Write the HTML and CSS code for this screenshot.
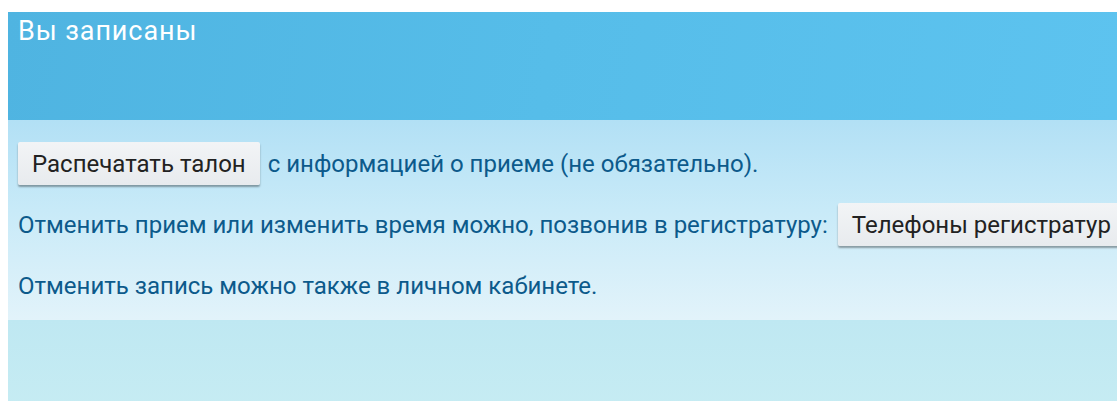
FILE: index.html
```html
<!DOCTYPE html>
<html lang="ru">
<head>
<meta charset="utf-8">
<title>Вы записаны</title>
<link rel="stylesheet" href="styles.css">
</head>
<body>
<div class="page">
  <header class="panel-head">
    <h1 class="panel-title">Вы записаны</h1>
  </header>
  <section class="panel-body">
    <div class="row">
      <button class="btn" type="button">Распечатать талон</button>
      <span class="note">с информацией о приеме (не обязательно).</span>
    </div>
    <div class="row">
      <span class="note">Отменить прием или изменить время можно, позвонив в регистратуру:</span>
      <button class="btn" type="button">Телефоны регистратур</button>
    </div>
    <div class="row">
      <span class="note">Отменить запись можно также в личном кабинете.</span>
    </div>
  </section>
  <div class="sky"></div>
</div>
</body>
</html>
```

FILE: styles.css
```css
html, body {
  margin: 0;
  padding: 0;
  background: #ffffff;
  overflow: hidden;
}

body {
  padding: 12px 0 0 8px;
  font-family: Roboto, "Liberation Sans", Arial, sans-serif;
}

.page {
  display: flex;
  flex-direction: column;
  min-width: 1200px;
}

/* blue title bar */
.panel-head {
  height: 108px;
  box-sizing: border-box;
  padding: 4px 10px 0;
  background: linear-gradient(100deg, #4fb4e1 0%, #56bde9 45%, #5ec4f0 100%);
}

.panel-title {
  margin: 0;
  font-size: 27px;
  font-weight: 400;
  line-height: 30px;
  letter-spacing: 0.9px;
  color: #ffffff;
}

/* light body with the actions */
.panel-body {
  display: flex;
  flex-direction: column;
  gap: 18px;
  padding: 22px 10px 13px;
  background: linear-gradient(180deg, #b2e0f5 0%, #c8eaf8 45%, #e2f3fa 100%);
}

.row {
  display: flex;
  align-items: center;
  gap: 8px;
  min-height: 43px;
  white-space: nowrap;
}

.row .note + .btn {
  margin-left: 2px;
}

.note {
  font-size: 24px;
  color: #0c5a8b;
}

.btn {
  height: 43px;
  padding: 0 14px;
  border: 0;
  border-radius: 2px;
  background: linear-gradient(180deg, #f2f4f6 0%, #e8ebee 100%);
  box-shadow: 0 2px 2px rgba(0, 0, 0, 0.35);
  font-family: inherit;
  font-size: 24px;
  color: #222222;
  cursor: pointer;
}

/* sky strip below the panel */
.sky {
  height: 90px;
  background: linear-gradient(180deg, #bfe8f2 0%, #c6ecf3 100%);
}
```
